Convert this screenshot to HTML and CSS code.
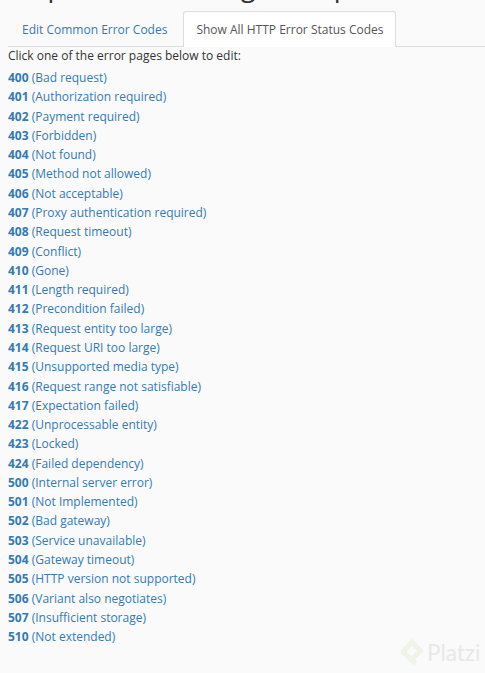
FILE: index.html
```html
<!DOCTYPE html>
<html lang="en">
<head>
  <meta charset="UTF-8">
  <meta name="viewport" content="width=device-width, initial-scale=1.0">
  <title>Error Pages</title>
  <link rel="stylesheet" href="styles.css">
</head>
<body>
  <h1 class="page-title">Step 2: Customizing Error pane</h1>
  <ul class="tabs">
    <li class="tab"><a href="#">Edit Common Error Codes</a></li>
    <li class="tab active"><a href="#">Show All HTTP Error Status Codes</a></li>
  </ul>
  <p class="intro">Click one of the error pages below to edit:</p>
  <ul class="codes">
    <li><a href="#"><b>400</b> (Bad request)</a></li>
    <li><a href="#"><b>401</b> (Authorization required)</a></li>
    <li><a href="#"><b>402</b> (Payment required)</a></li>
    <li><a href="#"><b>403</b> (Forbidden)</a></li>
    <li><a href="#"><b>404</b> (Not found)</a></li>
    <li><a href="#"><b>405</b> (Method not allowed)</a></li>
    <li><a href="#"><b>406</b> (Not acceptable)</a></li>
    <li><a href="#"><b>407</b> (Proxy authentication required)</a></li>
    <li><a href="#"><b>408</b> (Request timeout)</a></li>
    <li><a href="#"><b>409</b> (Conflict)</a></li>
    <li><a href="#"><b>410</b> (Gone)</a></li>
    <li><a href="#"><b>411</b> (Length required)</a></li>
    <li><a href="#"><b>412</b> (Precondition failed)</a></li>
    <li><a href="#"><b>413</b> (Request entity too large)</a></li>
    <li><a href="#"><b>414</b> (Request URI too large)</a></li>
    <li><a href="#"><b>415</b> (Unsupported media type)</a></li>
    <li><a href="#"><b>416</b> (Request range not satisfiable)</a></li>
    <li><a href="#"><b>417</b> (Expectation failed)</a></li>
    <li><a href="#"><b>422</b> (Unprocessable entity)</a></li>
    <li><a href="#"><b>423</b> (Locked)</a></li>
    <li><a href="#"><b>424</b> (Failed dependency)</a></li>
    <li><a href="#"><b>500</b> (Internal server error)</a></li>
    <li><a href="#"><b>501</b> (Not Implemented)</a></li>
    <li><a href="#"><b>502</b> (Bad gateway)</a></li>
    <li><a href="#"><b>503</b> (Service unavailable)</a></li>
    <li><a href="#"><b>504</b> (Gateway timeout)</a></li>
    <li><a href="#"><b>505</b> (HTTP version not supported)</a></li>
    <li><a href="#"><b>506</b> (Variant also negotiates)</a></li>
    <li><a href="#"><b>507</b> (Insufficient storage)</a></li>
    <li><a href="#"><b>510</b> (Not extended)</a></li>
  </ul>
  <div class="watermark">
    <svg width="23" height="27" viewBox="0 0 23 27">
      <path d="M15.5 24.5 L3 13 L12 3 L20.5 12 L12 20" fill="none" stroke="#f0f3e8" stroke-width="5" stroke-linejoin="round"/>
    </svg>
    <span>Platzi</span>
  </div>
</body>
</html>
```
FILE: styles.css
```css
body {
  margin: 0;
  display: flow-root;
  height: 673px;
  overflow: hidden;
  position: relative;
  background-color: #fafafa;
  color: #333;
  font-family: "Open Sans", sans-serif;
  font-size: 12px;
}

a {
  color: #337ab7;
  text-decoration: none;
}

ul {
  list-style: none;
  margin: 0;
  padding: 0;
}

.page-title {
  margin: -29px 0 0 8px;
  height: 30px;
  font-size: 27px;
  font-weight: 400;
  line-height: 30px;
  white-space: nowrap;
}

.tabs {
  display: flex;
  margin: 0 0 0 8px;
  padding-top: 10px;
  border-bottom: 1px solid #ddd;
}

.tab a {
  display: block;
  padding: 11px 13px 9px;
  line-height: 14px;
  border: 1px solid transparent;
  border-bottom: none;
}

.tab.active {
  margin-left: 2px;
  margin-bottom: -1px;
}

.tab.active a {
  color: #555;
  background-color: #fff;
  border-color: #ddd;
  border-radius: 3px 3px 0 0;
  padding: 11px 12px 10px;
}

.intro {
  margin: 0 0 4px 8px;
  line-height: 17px;
}

.codes {
  margin-left: 8px;
}

.codes li {
  line-height: 19.28px;
}

.watermark {
  position: absolute;
  left: 400px;
  top: 639px;
  display: flex;
  align-items: center;
  gap: 4px;
  color: #e8e8e8;
  font-family: "Lato", sans-serif;
  font-size: 22.5px;
  font-weight: 400;
}
```
